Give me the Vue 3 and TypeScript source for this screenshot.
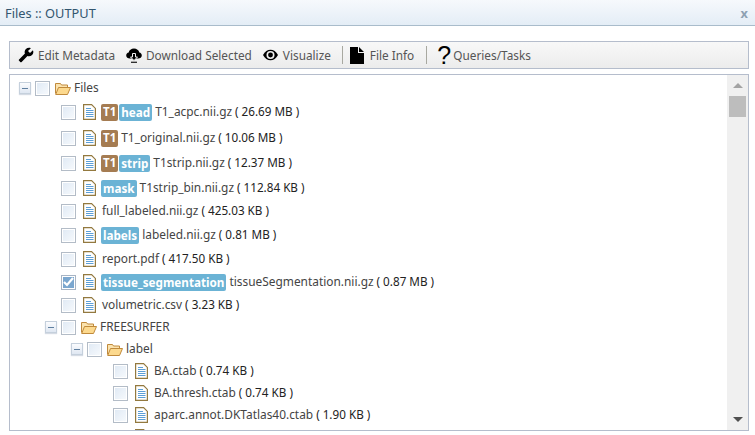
<script setup lang="ts">
interface Row {
  level: number
  next: number
  folder?: boolean
  checked?: boolean
  t1?: boolean
  badge?: string
  name: string
  size?: string
}
const rows: Row[] = [
  { level: 0, next: 24, folder: true, name: 'Files' },
  { level: 1, next: 26, t1: true, badge: 'head', name: 'T1_acpc.nii.gz', size: '( 26.69 MB )' },
  { level: 1, next: 25, t1: true, name: 'T1_original.nii.gz', size: '( 10.06 MB )' },
  { level: 1, next: 25, t1: true, badge: 'strip', name: 'T1strip.nii.gz', size: '( 12.37 MB )' },
  { level: 1, next: 23, badge: 'mask', name: 'T1strip_bin.nii.gz', size: '( 112.84 KB )' },
  { level: 1, next: 24, name: 'full_labeled.nii.gz', size: '( 425.03 KB )' },
  { level: 1, next: 24, badge: 'labels', name: 'labeled.nii.gz', size: '( 0.81 MB )' },
  { level: 1, next: 23, name: 'report.pdf', size: '( 417.50 KB )' },
  { level: 1, next: 23, checked: true, badge: 'tissue_segmentation', name: 'tissueSegmentation.nii.gz', size: '( 0.87 MB )' },
  { level: 1, next: 22, name: 'volumetric.csv', size: '( 3.23 KB )' },
  { level: 1, next: 22, folder: true, name: 'FREESURFER' },
  { level: 2, next: 22, folder: true, name: 'label' },
  { level: 3, next: 22, name: 'BA.ctab', size: '( 0.74 KB )' },
  { level: 3, next: 22, name: 'BA.thresh.ctab', size: '( 0.74 KB )' },
  { level: 3, next: 22, name: 'aparc.annot.DKTatlas40.ctab', size: '( 1.90 KB )' },
]
const indent = (r: Row) => ({ marginBottom: r.next - 20 + 'px', paddingLeft: 9 + r.level * 26 + 'px' })
</script>

<template>
  <div class="win">
    <header class="title">
      <span>Files :: OUTPUT</span>
      <span class="close">x</span>
    </header>
    <div class="toolbar">
      <button class="tool first">
        <svg width="16" height="16" viewBox="0 0 24 24"><path transform="matrix(-1 0 0 1 24 0)" d="M22.7 19l-9.1-9.1c.9-2.3.4-5-1.5-6.9-2-2-5-2.4-7.4-1.3L9 6 6 9 1.6 4.7C.4 7.1.9 10.1 2.9 12.1c1.9 1.9 4.6 2.4 6.9 1.5l9.1 9.1c.4.4 1 .4 1.4 0l2.3-2.3c.5-.4.5-1.1.1-1.4z" /></svg>
        Edit Metadata
      </button>
      <button class="tool">
        <svg width="16" height="16" viewBox="0 0 16 16"><path d="M4 11.500C1.800 11.500.2 10.200.2 8.400c0-1.500 1.100-2.700 2.500-2.900C3.100 3.300 5.300 1.600 8 1.600s4.800 1.700 5.300 3.900c1.400.2 2.500 1.400 2.500 2.900 0 1.800-1.600 3.100-3.800 3.100z" /><path d="M6.500 6.500h3v3.500h2L8 13.500 4.500 10h2z" fill="#000" stroke="#f1f1f1" /><path d="M5 14.700h6v1.100H5z" /></svg>
        Download Selected
      </button>
      <button class="tool eye">
        <svg width="15" height="12" viewBox="0 0 16 12"><path d="M0 6C2 2.200 4.800.4 8 .4S14 2.200 16 6c-2 3.800-4.800 5.600-8 5.600S2 9.800 0 6z" /><circle cx="8" cy="6" r="4.300" fill="#f1f1f1" /><circle cx="8" cy="6" r="2.600" /></svg>
        Visualize
      </button>
      <i class="sep s1"></i>
      <button class="tool file">
        <svg width="14" height="17" viewBox="0 0 14 17"><path d="M0 0h8v6h6v11H0zM9 0l5 5H9z" /></svg>
        File Info
      </button>
      <i class="sep s2"></i>
      <button class="tool help"><span class="q">?</span>Queries/Tasks</button>
    </div>
    <section class="panel">
      <div class="tree">
        <div v-for="r in rows" :key="r.name" class="row" :style="indent(r)">
          <span class="exp" :class="{ hidden: !r.folder }"><i></i></span>
          <span class="cb" :class="{ on: r.checked }">
            <svg v-if="r.checked" width="11" height="10" viewBox="0 0 11 10"><path d="M1 5l3 3 6-7" fill="none" stroke="#fff" stroke-width="2.200" /></svg>
          </span>
          <svg v-if="r.folder" class="ico folder" width="16" height="13" viewBox="0 0 16 13">
            <path d="M.5 11.500V1.500h5l1 1.500h6v2" fill="#fbe3ae" stroke="#c08a3c" />
            <path d="M.7 12.500L3.500 5.500h12l-3 7z" fill="#fcd98e" stroke="#c08a3c" />
          </svg>
          <svg v-else class="ico doc" width="13" height="16" viewBox="0 0 13 16">
            <path d="M.6.600h8l3.800 3.800v11H.6z" fill="#fff" stroke="#93793f" stroke-width="1.200" />
            <path d="M3 4.500h5M3 6.500h7.500M3 8.500h7.500M3 10.500h7.500M3 12.500h7.500" stroke="#5d9fd6" />
          </svg>
          <span v-if="r.t1" class="badge t1">T1</span>
          <span v-if="r.badge" class="badge blue">{{ r.badge }}</span>
          <span class="name">{{ r.name }}</span>
          <span v-if="r.size" class="size">{{ r.size }}</span>
        </div>
        <div class="row cut">
          <svg class="ico doc" width="13" height="16" viewBox="0 0 13 16">
            <path d="M.6.600h8l3.800 3.800v11H.6z" fill="#fff" stroke="#93793f" stroke-width="1.200" />
          </svg>
        </div>
      </div>
      <aside class="scroll">
        <i class="up"></i>
        <i class="thumb"></i>
        <i class="down"></i>
      </aside>
    </section>
  </div>
</template>

<style>
html, body { margin: 0; background: #fff; }
</style>

<style scoped>
.win {
  width: 755px;
  height: 435px;
  overflow: hidden;
  background: #fff;
  font-family: "Noto Sans", "Liberation Sans", sans-serif;
  font-size: 11.9px;
  color: #444;
}
.title {
  height: 25px;
  border-bottom: 1px solid #a9bccb;
  background: linear-gradient(#f6f9fc, #e4edf6);
  display: flex;
  justify-content: space-between;
  align-items: center;
  padding: 0 7px 0 5px;
  font-size: 12.8px;
  color: #33566f;
}
.close { font-weight: 700; color: #8ea1b2; }
.toolbar {
  margin: 15px 6px 0 9px;
  height: 26px;
  border: 1px solid #b5bdcc;
  background: linear-gradient(#f8f8f8, #ececec);
  display: flex;
  align-items: center;
  padding-left: 8px;
}
.tool {
  all: unset;
  display: inline-flex;
  align-items: center;
  gap: 4px;
  font-size: 11.8px;
  color: #555;
  white-space: nowrap;
}
.tool svg { flex: none; }
.tool.first { width: 108px; }
.tool.eye { margin-left: 11px; gap: 5px; }
.tool.file { gap: 6px; }
.tool.help { gap: 2px; }
.q { font-size: 25px; line-height: 20px; color: #000; width: 14px; text-align: center; font-family: "Liberation Sans", sans-serif; }
.sep { width: 1px; height: 18px; background: #a8a8a0; }
.s1 { margin: 0 7px 0 11px; }
.s2 { margin: 0 10px 0 12px; }
.panel {
  margin: 5px 6px 0 9px;
  height: 355px;
  border: 1px solid #b5bdcc;
  display: flex;
  overflow: hidden;
  background: #fff;
}
.tree { flex: 1; padding-top: 2px; overflow: hidden; }
.row { display: flex; align-items: center; white-space: nowrap; height: 20px; }
.cut { padding-left: 118px; }
.exp {
  width: 10px;
  height: 10px;
  margin-top: 2px;
  border: 1px solid #c5d0dc;
  background: linear-gradient(#fbfcfe, #dfe7f2);
  box-shadow: 0 1px 1px #d5dbe4;
  display: flex;
  align-items: center;
  justify-content: center;
  flex: none;
}
.exp i { width: 6px; height: 1px; background: #5f7f9f; }
.exp.hidden { visibility: hidden; }
.cb {
  margin: 2px 0 0 4px;
  width: 13px;
  height: 13px;
  border: 1px solid #b3bcc7;
  box-shadow: inset 0 0 0 1px #fff;
  background: linear-gradient(135deg, #dfe9f4, #f7fafd);
  display: flex;
  align-items: center;
  justify-content: center;
  flex: none;
}
.cb.on { background: #7ba7cf; border-color: #a7b4c4; }
.ico { flex: none; margin-top: 2px; }
.folder { margin: 2px 3px 0 5px; }
.doc { margin: 2px 5px 0 7px; }
.doc + .name { margin-left: 1px; }
.badge {
  color: #fff;
  font-weight: 700;
  font-size: 11.7px;
  border-radius: 2px;
  padding: 0 2px;
  height: 17px;
  line-height: 16px;
  margin: 2px 2px 0 0;
  flex: none;
}
.t1 { background: #a57c52; font-size: 11.5px; margin-right: 1px; }
.blue { background: #6bb3d5; }
.badge + .name { margin-left: 1px; }
.t1 + .name { margin-left: 2px; }
.name { margin-right: 3px; }
.size { color: #222; font-size: 11.7px; }
.scroll {
  width: 21px;
  flex: none;
  background: #f0f0f0;
  display: flex;
  flex-direction: column;
  align-items: center;
}
.up {
  margin-top: 8px;
  border: 5px solid transparent;
  border-top: 0;
  border-bottom: 5px solid #a3a3a3;
}
.thumb { margin-top: 8px; width: 17px; height: 21px; background: #bdbdbd; }
.down {
  margin-top: auto;
  margin-bottom: 8px;
  border: 5px solid transparent;
  border-bottom: 0;
  border-top: 5px solid #505050;
}
</style>
